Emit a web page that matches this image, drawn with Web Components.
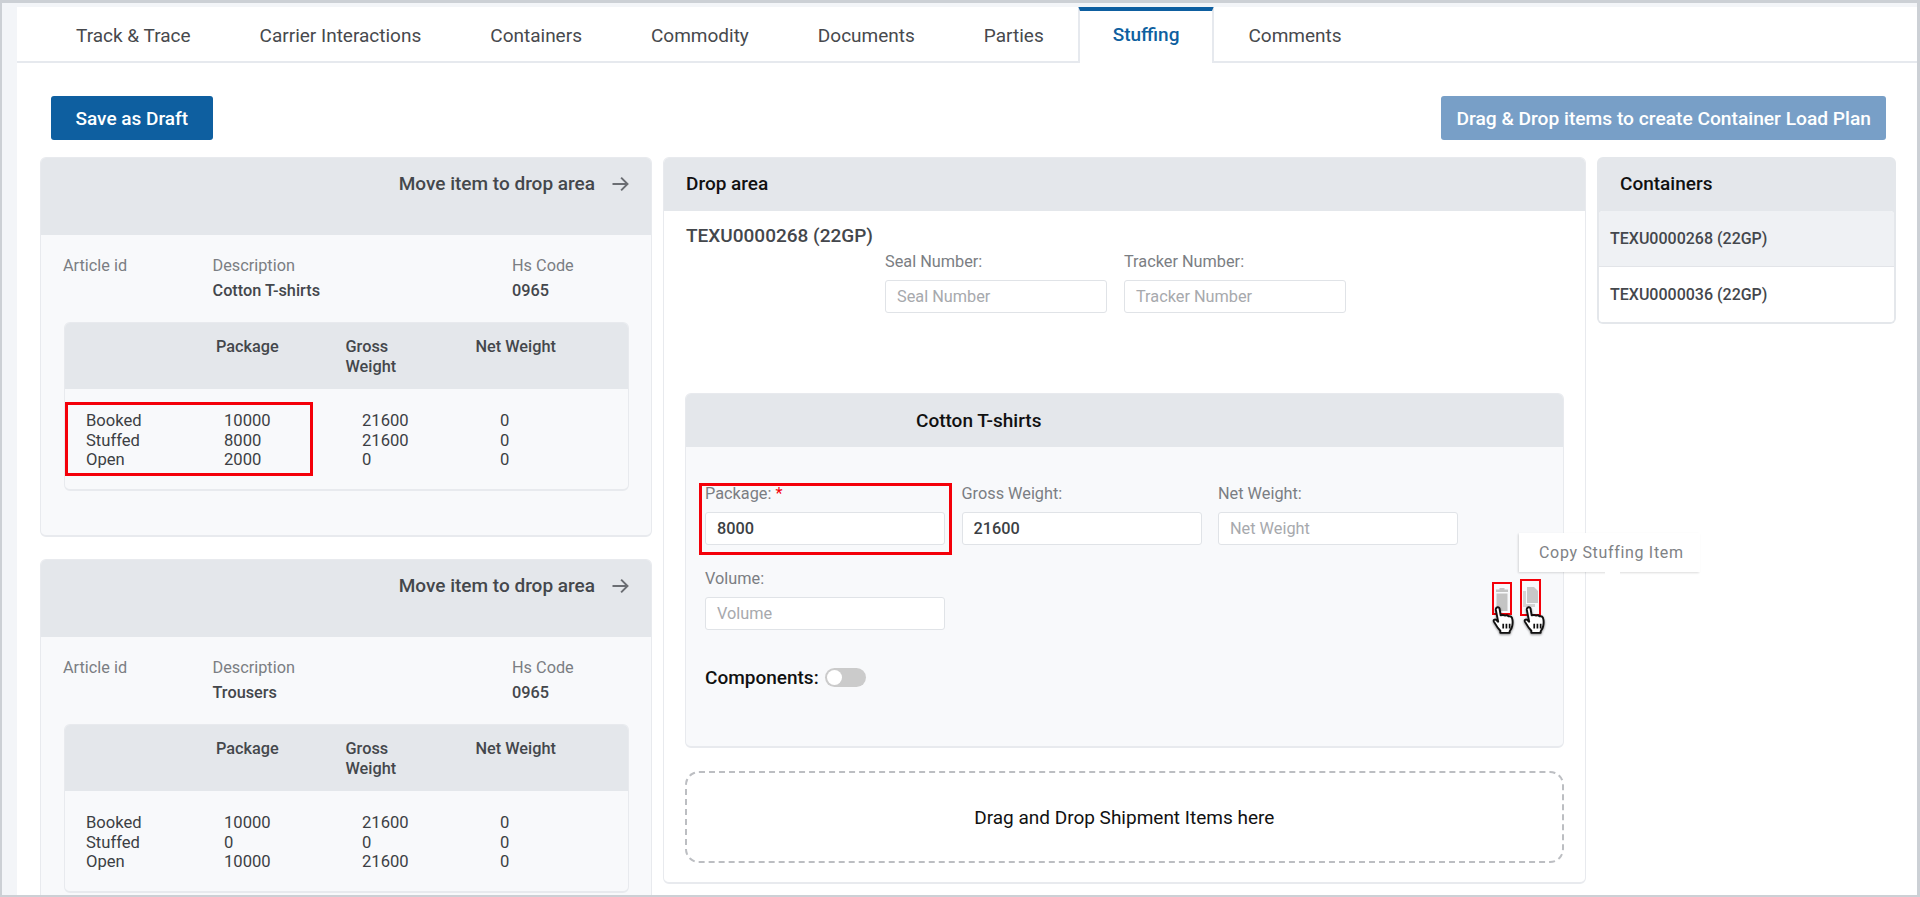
<!DOCTYPE html>
<html lang="en">
<head>
<meta charset="utf-8">
<title>Stuffing</title>
<style>
  html, body { margin: 0; padding: 0; height: 100%; overflow: hidden; background: #fff; }
  body { font-family: Roboto, "Liberation Sans", sans-serif; }
</style>
</head>
<body>

<app-frame>
  <tab-bar slot="tabs">
    <tab-item>Track &amp; Trace</tab-item>
    <tab-item>Carrier Interactions</tab-item>
    <tab-item>Containers</tab-item>
    <tab-item>Commodity</tab-item>
    <tab-item>Documents</tab-item>
    <tab-item>Parties</tab-item>
    <tab-item active>Stuffing</tab-item>
    <tab-item>Comments</tab-item>
  </tab-bar>

  <action-button slot="left">Save as Draft</action-button>
  <action-button slot="right" muted>Drag &amp; Drop items to create Container Load Plan</action-button>

  <shipment-item slot="items" description="Cotton T-shirts" hs="0965" highlight>
    <qty-row label="Booked" package="10000" gross="21600" net="0"></qty-row>
    <qty-row label="Stuffed" package="8000" gross="21600" net="0"></qty-row>
    <qty-row label="Open" package="2000" gross="0" net="0"></qty-row>
  </shipment-item>
  <shipment-item slot="items" description="Trousers" hs="0965">
    <qty-row label="Booked" package="10000" gross="21600" net="0"></qty-row>
    <qty-row label="Stuffed" package="0" gross="0" net="0"></qty-row>
    <qty-row label="Open" package="10000" gross="21600" net="0"></qty-row>
  </shipment-item>

  <drop-area slot="drop" container="TEXU0000268 (22GP)">
    <stuffing-card title-text="Cotton T-shirts"></stuffing-card>
    <drop-zone>Drag and Drop Shipment Items here</drop-zone>
  </drop-area>

  <container-list slot="containers">
    <container-row selected>TEXU0000268 (22GP)</container-row>
    <container-row>TEXU0000036 (22GP)</container-row>
  </container-list>
</app-frame>

<script>
(function () {
  'use strict';

  class AppFrame extends HTMLElement {
    constructor () {
      super();
      this.attachShadow({mode: 'open'});
      this.shadowRoot.innerHTML = `
        <style>
          :host {
            display: block;
            box-sizing: border-box;
            width: 1920px;
            height: 897px;
            overflow: hidden;
            background: #f3f5f8;
            border-style: solid;
            border-color: #ccd0d5;
            border-width: 3px 3px 2px 2px;
            padding: 4px 0 0 15px;
          }
          .sheet {
            height: 100%;
            overflow: hidden;
            background: #fff;
          }
          .toolbar {
            display: flex;
            justify-content: space-between;
            padding: 33px 31px 17px 33.5px;
          }
          .columns {
            display: grid;
            grid-template-columns: 612px 923px 299px;
            column-gap: 11px;
            padding-left: 23px;
            align-items: start;
          }
          .items {
            display: flex;
            flex-direction: column;
            gap: 22px;
          }
        </style>
        <div class="sheet">
          <slot name="tabs"></slot>
          <div class="toolbar">
            <slot name="left"></slot>
            <slot name="right"></slot>
          </div>
          <div class="columns">
            <div class="items"><slot name="items"></slot></div>
            <slot name="drop"></slot>
            <slot name="containers"></slot>
          </div>
        </div>
      `;
    }
  }

  class TabBar extends HTMLElement {
    constructor () {
      super();
      this.attachShadow({mode: 'open'});
      this.shadowRoot.innerHTML = `
        <style>
          :host {
            display: flex;
            height: 56px;
            padding-left: 24.5px;
            box-sizing: border-box;
            border-bottom: 2px solid #e6e9ee;
          }
        </style>
        <slot></slot>
      `;
    }
  }

  class TabItem extends HTMLElement {
    constructor () {
      super();
      this.attachShadow({mode: 'open'});
      this.shadowRoot.innerHTML = `
        <style>
          :host {
            display: flex;
            align-items: center;
            box-sizing: border-box;
            height: 56px;
            padding: 0 34.5px;
            font-size: 19px;
            color: #47494d;
          }
          :host([active]) {
            color: #0e5fa0;
            font-weight: 500;
            background: #fff;
            border-top: 5px solid #0e5fa0;
            border-left: 2px solid #e6e9ee;
            border-right: 2px solid #e6e9ee;
            padding: 0 32.5px 5px;
            margin-top: -1px;
            height: 57px;
          }
        </style>
        <slot></slot>
      `;
    }
  }

  class ActionButton extends HTMLElement {
    constructor () {
      super();
      this.attachShadow({mode: 'open'});
      this.shadowRoot.innerHTML = `
        <style>
          :host {
            display: inline-flex;
            align-items: center;
            box-sizing: border-box;
            height: 44px;
            padding: 0 25px;
            border-radius: 3px;
            background: #0e5fa0;
            color: #fff;
            font-size: 19px;
            font-weight: 500;
          }
          :host([muted]) {
            background: #789fc7;
            padding: 0 15px;
            font-size: 19.2px;
          }
        </style>
        <slot></slot>
      `;
    }
  }

  class QtyRow extends HTMLElement {
    constructor () {
      super();
      this.attachShadow({mode: 'open'});
      this.shadowRoot.innerHTML = `
        <style>
          :host {
            display: grid;
            grid-template-columns: 138px 138px 138px 1fr;
            height: 19.3px;
            line-height: 19.3px;
            padding-left: 21.5px;
            font-size: 16.6px;
            color: #3c3f44;
          }
        </style>
        <span id="label"></span><span id="package"></span><span id="gross"></span><span id="net"></span>
      `;
    }

    connectedCallback () {
      for (const key of ['label', 'package', 'gross', 'net']) {
        this.shadowRoot.getElementById(key).textContent = this.getAttribute(key);
      }
    }
  }

  class ShipmentItem extends HTMLElement {
    constructor () {
      super();
      this.attachShadow({mode: 'open'});
      this.shadowRoot.innerHTML = `
        <style>
          :host {
            display: block;
            box-sizing: border-box;
            height: 380px;
            background: #f8f9fb;
            border: 1px solid #e8eaee;
            border-bottom-width: 2px;
            border-radius: 6px;
            overflow: hidden;
          }
          .head {
            display: flex;
            justify-content: flex-end;
            gap: 16px;
            box-sizing: border-box;
            height: 76.5px;
            padding: 14.5px 22px 0 0;
            background: #e4e7eb;
            font-size: 19px;
            font-weight: 500;
            line-height: 22px;
            color: #44474c;
          }
          .head svg { width: 18px; height: 18px; margin-top: 2px; }
          .meta {
            display: grid;
            grid-template-columns: 149.5px 299.5px 1fr;
            padding: 19.5px 22px 0;
            font-size: 16.3px;
            line-height: 24px;
            color: #7b7e83;
          }
          .meta b { font-weight: 500; color: #44474c; position: relative; top: 1px; }
          .table {
            position: relative;
            box-sizing: border-box;
            height: 169px;
            margin: 20px 22px 0 22.5px;
            background: #f8f9fb;
            border: 1px solid #e8eaee;
            border-bottom-width: 2px;
            border-radius: 6px;
            overflow: hidden;
          }
          .table-head {
            display: grid;
            grid-template-columns: 151.5px 129.5px 130px 1fr;
            box-sizing: border-box;
            height: 66px;
            padding-top: 14.4px;
            background: #e4e7eb;
            font-size: 16.3px;
            font-weight: 500;
            line-height: 19.3px;
            color: #44474c;
          }
          .table-head span:nth-child(3) { width: 70px; }
          .rows { padding-top: 22.4px; }
          .mark {
            display: none;
            position: absolute;
            left: 0;
            top: 79px;
            box-sizing: border-box;
            width: 248px;
            height: 74px;
            border: 3px solid #f40009;
          }
          :host([highlight]) .mark { display: block; }
        </style>
        <div class="head">
          Move item to drop area
          <svg viewBox="0 0 24 24" fill="none" stroke="#6b6e73" stroke-width="2.6"><path d="M2 12h20M13.5 3.5 22 12l-8.500 8.500"/></svg>
        </div>
        <div class="meta">
          <span>Article id</span><span>Description</span><span>Hs Code</span>
          <span></span><b id="desc"></b><b id="hs"></b>
        </div>
        <div class="table">
          <div class="table-head"><span></span><span>Package</span><span>Gross Weight</span><span>Net Weight</span></div>
          <div class="rows"><slot></slot></div>
          <div class="mark"></div>
        </div>
      `;
    }

    connectedCallback () {
      this.shadowRoot.getElementById('desc').textContent = this.getAttribute('description');
      this.shadowRoot.getElementById('hs').textContent = this.getAttribute('hs');
    }
  }

  class FormField extends HTMLElement {
    constructor () {
      super();
      this.attachShadow({mode: 'open'});
      this.shadowRoot.innerHTML = `
        <style>
          :host {
            display: block;
            width: var(--field-width, 240px);
          }
          .label {
            display: block;
            height: 18px;
            line-height: 18px;
            font-size: 16.3px;
            color: #7b7e83;
            white-space: nowrap;
          }
          .req { color: #f40009; display: none; }
          :host([required]) .req { display: inline; }
          .box {
            box-sizing: border-box;
            height: 33px;
            margin-top: 9px;
            padding: 0 11px;
            line-height: 31px;
            font-size: 16.3px;
            background: #fff;
            border: 1px solid #e0e3e7;
            border-radius: 3px;
            color: #a7a9ad;
          }
          .box.filled { color: #3c3f44; font-weight: 500; }
        </style>
        <span class="label"><span id="label"></span> <span class="req">*</span></span>
        <div class="box" id="box"></div>
      `;
    }

    connectedCallback () {
      const label = this.getAttribute('label');
      const value = this.getAttribute('value');
      const box = this.shadowRoot.getElementById('box');
      this.shadowRoot.getElementById('label').textContent = label + ':';
      box.textContent = value || label;
      box.classList.toggle('filled', !!value);
    }
  }

  class PointerIcon extends HTMLElement {
    constructor () {
      super();
      this.attachShadow({mode: 'open'});
      this.shadowRoot.innerHTML = `
        <style>
          :host { display: block; width: 26px; height: 30px; }
          svg { display: block; filter: drop-shadow(0 1px 1px rgba(0,0,0,.45)); }
        </style>
        <svg width="26" height="30" viewBox="0 0 24 28">
          <path d="M6 2.500c1.200-1 2.600-.3 2.800 1l1 6.200c1.600-.6 3.200-.5 4 .2 1.300-.5 2.700-.2 3.400.7 1.300-.4 2.700.2 3.200 1.500.7 2 .7 5 .2 7.500-.4 2-1.300 3.600-2.400 4.900v1.500H9.500v-2C7.500 22 5.500 19 3.500 15.500c-.7-1.300.8-2.600 2-1.700l2 1.800L5.300 4.600c-.1-.8.200-1.500.7-2.100z" fill="#fff" stroke="#111" stroke-width="1.800" stroke-linejoin="round"/>
          <path d="M12.200 17.500v4.500M15.200 17.500v4.500M18.200 17.500v4.500" stroke="#111" stroke-width="1.600" fill="none"/>
        </svg>
      `;
    }
  }

  class StuffingCard extends HTMLElement {
    constructor () {
      super();
      this.attachShadow({mode: 'open'});
      this.shadowRoot.innerHTML = `
        <style>
          :host {
            display: block;
            position: relative;
            box-sizing: border-box;
            height: 355px;
            background: #f8f9fb;
            border: 1px solid #e8eaee;
            border-bottom-width: 2px;
            border-radius: 6px;
          }
          .head {
            box-sizing: border-box;
            height: 53px;
            padding: 15.5px 0 0 230.5px;
            line-height: 22px;
            background: #e4e7eb;
            border-radius: 5px 5px 0 0;
            font-size: 19px;
            font-weight: 500;
            color: #111;
          }
          .form {
            display: grid;
            grid-template-columns: repeat(3, 240px);
            column-gap: 16.500px;
            row-gap: 25px;
            padding: 38px 0 0 19.5px;
          }
          .components {
            display: flex;
            align-items: center;
            gap: 6px;
            margin: 37px 0 0 19.5px;
            height: 20px;
            font-size: 19px;
            font-weight: 500;
            color: #111;
          }
          .toggle {
            position: relative;
            width: 41px;
            height: 19px;
            border-radius: 10px;
            background: #cbcbcb;
          }
          .toggle::before {
            content: '';
            position: absolute;
            left: 2px;
            top: 2px;
            width: 15px;
            height: 15px;
            border-radius: 50%;
            background: #fff;
          }
          .mark {
            position: absolute;
            left: 13.5px;
            top: 89px;
            box-sizing: border-box;
            width: 253px;
            height: 72px;
            border: 3px solid #f40009;
          }
          .action {
            position: absolute;
            box-sizing: border-box;
            border: 2.500px solid #f40009;
            display: flex;
            align-items: flex-start;
            justify-content: center;
          }
          .action svg { display: block; flex: none; }
          .trash { left: 806.5px; top: 188px; width: 20px; height: 33px; }
          .trash svg { margin-top: 4px; }
          .copy { left: 834.5px; top: 185px; width: 21px; height: 37px; }
          .copy svg { margin-top: 6px; }
          pointer-icon { position: absolute; }
          .p1 { left: 804.5px; top: 211px; }
          .p2 { left: 835px; top: 211px; }
          .tip {
            position: absolute;
            left: 833.5px;
            top: 139px;
            box-sizing: border-box;
            width: 181px;
            height: 39px;
            padding: 0 0 0 20px;
            line-height: 39px;
            background: #fff;
            box-shadow: -1px 1px 2px rgba(0,0,0,.14);
            font-size: 16px;
            letter-spacing: .68px;
            color: #808285;
            white-space: nowrap;
            z-index: 2;
          }
          .tip::after {
            content: '';
            position: absolute;
            left: 86px;
            bottom: -3px;
            width: 15px;
            height: 3px;
            background: #fff;
          }
        </style>
        <div class="head" id="title"></div>
        <div class="form">
          <form-field label="Package" value="8000" required></form-field>
          <form-field label="Gross Weight" value="21600"></form-field>
          <form-field label="Net Weight"></form-field>
          <form-field label="Volume"></form-field>
        </div>
        <div class="components">Components: <span class="toggle"></span></div>
        <div class="mark"></div>
        <div class="action trash">
          <svg width="12" height="23" viewBox="0 0 12 23" fill="#c4c4c4"><path d="M3.500 0h5v1.500H12V4H0V1.500h3.500zM.5 5.500h11V23H.5z"/></svg>
        </div>
        <div class="action copy">
          <svg width="15" height="20" viewBox="0 0 15 20"><path d="M0 4h3v13h9v3H0z" fill="#d4d4d4"/><path d="M4 0h7l4 4v12H4z" fill="#c8c8c8"/></svg>
        </div>
        <pointer-icon class="p1"></pointer-icon>
        <pointer-icon class="p2"></pointer-icon>
        <div class="tip">Copy Stuffing Item</div>
      `;
    }

    connectedCallback () {
      this.shadowRoot.getElementById('title').textContent = this.getAttribute('title-text');
    }
  }

  class DropZone extends HTMLElement {
    constructor () {
      super();
      this.attachShadow({mode: 'open'});
      this.shadowRoot.innerHTML = `
        <style>
          :host {
            display: flex;
            align-items: center;
            justify-content: center;
            box-sizing: border-box;
            height: 92px;
            margin-top: 23px;
            border: 2.500px dashed #bcbec2;
            border-radius: 14px;
            font-size: 19px;
            color: #111;
          }
        </style>
        <slot></slot>
      `;
    }
  }

  class DropArea extends HTMLElement {
    constructor () {
      super();
      this.attachShadow({mode: 'open'});
      this.shadowRoot.innerHTML = `
        <style>
          :host {
            display: block;
            box-sizing: border-box;
            height: 727px;
            background: #fff;
            border: 1px solid #e8eaee;
            border-bottom-width: 2px;
            border-radius: 6px;
          }
          .head {
            box-sizing: border-box;
            height: 53px;
            padding: 14.5px 0 0 22px;
            line-height: 22px;
            background: #e4e7eb;
            border-radius: 5px 5px 0 0;
            font-size: 19px;
            font-weight: 500;
            color: #111;
          }
          .body { padding: 14.5px 21px 0 20.500px; }
          .name {
            height: 20px;
            line-height: 20px;
            margin-left: 1.5px;
            font-size: 19px;
            font-weight: 500;
            color: #44474c;
          }
          .seal {
            display: flex;
            gap: 17px;
            padding-left: 200.5px;
            margin-top: 7px;
            --field-width: 222px;
          }
          .cards { margin-top: 80.5px; }
        </style>
        <div class="head">Drop area</div>
        <div class="body">
          <div class="name" id="name"></div>
          <div class="seal">
            <form-field label="Seal Number"></form-field>
            <form-field label="Tracker Number"></form-field>
          </div>
          <div class="cards"><slot></slot></div>
        </div>
      `;
    }

    connectedCallback () {
      this.shadowRoot.getElementById('name').textContent = this.getAttribute('container');
    }
  }

  class ContainerList extends HTMLElement {
    constructor () {
      super();
      this.attachShadow({mode: 'open'});
      this.shadowRoot.innerHTML = `
        <style>
          :host {
            display: block;
            box-sizing: border-box;
            background: #e4e7eb;
            border-radius: 6px;
            padding: 0 2px 1.5px;
          }
          .head {
            box-sizing: border-box;
            height: 54px;
            padding: 16px 0 0 21px;
            line-height: 22px;
            font-size: 19px;
            font-weight: 500;
            color: #111;
          }
          .list {
            background: #fff;
            border-radius: 4px;
            overflow: hidden;
          }
        </style>
        <div class="head">Containers</div>
        <div class="list"><slot></slot></div>
      `;
    }
  }

  class ContainerRow extends HTMLElement {
    constructor () {
      super();
      this.attachShadow({mode: 'open'});
      this.shadowRoot.innerHTML = `
        <style>
          :host {
            display: flex;
            align-items: center;
            box-sizing: border-box;
            height: 55.5px;
            padding-left: 11px;
            background: #fff;
            font-size: 16px;
            font-weight: 500;
            color: #44474c;
          }
          :host([selected]) {
            background: #eff1f4;
            border-bottom: 1px solid #e2e4e8;
          }
        </style>
        <slot></slot>
      `;
    }
  }

  customElements.define('app-frame', AppFrame);
  customElements.define('tab-bar', TabBar);
  customElements.define('tab-item', TabItem);
  customElements.define('action-button', ActionButton);
  customElements.define('qty-row', QtyRow);
  customElements.define('shipment-item', ShipmentItem);
  customElements.define('form-field', FormField);
  customElements.define('pointer-icon', PointerIcon);
  customElements.define('stuffing-card', StuffingCard);
  customElements.define('drop-zone', DropZone);
  customElements.define('drop-area', DropArea);
  customElements.define('container-list', ContainerList);
  customElements.define('container-row', ContainerRow);
}());
</script>
</body>
</html>
